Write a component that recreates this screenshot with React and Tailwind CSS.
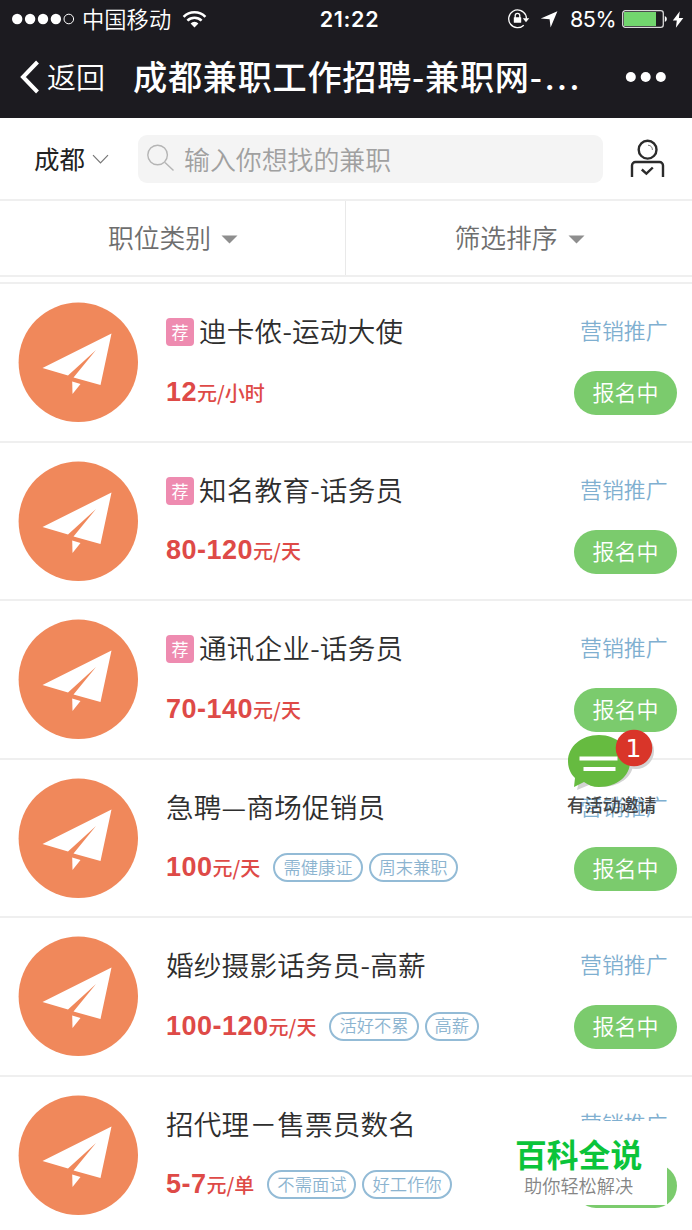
const jobs = [
  { title: '迪卡侬-运动大使', hot: true, pay: '12', unit: '元/小时', tags: [] },
  { title: '知名教育-话务员', hot: true, pay: '80-120', unit: '元/天', tags: [] },
  { title: '通讯企业-话务员', hot: true, pay: '70-140', unit: '元/天', tags: [] },
  { title: '急聘—商场促销员', pay: '100', unit: '元/天', tags: ['需健康证', '周末兼职'] },
  { title: '婚纱摄影话务员-高薪', pay: '100-120', unit: '元/天', tags: ['活好不累', '高薪'] },
  { title: '招代理－售票员数名', pay: '5-7', unit: '元/单', tags: ['不需面试', '好工作你'] },
];

function StatusBar() {
  return (
    <div className="grid h-[38px] grid-cols-3 items-center text-white">
      <div className="flex items-center pl-3">
        <svg width="63" height="12" viewBox="0 0 63 12" fill="#fff">
          <circle cx="5.2" cy="6" r="5.2" />
          <circle cx="18.1" cy="6" r="5.2" />
          <circle cx="31" cy="6" r="5.2" />
          <circle cx="43.9" cy="6" r="5.2" />
          <circle cx="56.8" cy="6" r="4.8" fill="none" stroke="#fff" strokeWidth="1" />
        </svg>
        <span className="ml-[7px] pb-[3px] text-[22.3px] leading-[30px] font-[350]">中国移动</span>
        <svg className="ml-[11px]" width="25" height="18" viewBox="0 0 25 18" fill="none" stroke="#fff">
          <path d="M1.6 6.8a15.4 15.4 0 0 1 21.8 0" strokeWidth="2.6" />
          <path d="M5.4 10.6a10 10 0 0 1 14.2 0" strokeWidth="2.5" />
          <path d="M12.5 17.4 8.6 13.4a5.6 5.6 0 0 1 7.8 0z" fill="#fff" stroke="none" />
        </svg>
      </div>
      <div className="pl-[7px] text-center font-['Inter'] text-[21.5px] font-semibold tracking-[0.7px]">21:22</div>
      <div className="flex items-center justify-end pr-2">
        <svg width="22" height="20" viewBox="0 0 22 20">
          <path d="M17.7 6.1A8.9 8.9 0 1 0 15.8 16.2" fill="none" stroke="#fff" strokeWidth="1.3" />
          <path d="M17.7 6.1a8.9 8.9 0 0 1 .7 3.6" fill="none" stroke="#fff" strokeWidth="1.3" />
          <path d="M14.8 9.2h6.4L18 13.2z" fill="#fff" />
          <rect x="5.8" y="8.2" width="7.4" height="5.6" rx=".6" fill="#fff" />
          <path d="M7.2 9V6.6a2.3 2.3 0 0 1 4.6 0V9" fill="none" stroke="#fff" strokeWidth="1.3" />
        </svg>
        <svg className="ml-[10px]" width="18" height="17" viewBox="0 0 18 17" fill="#fff">
          <path d="M17.4.3 10.6 16.6 9.6 8.2.8 7.6z" />
        </svg>
        <span className="ml-[12px] font-['Inter'] text-[21.5px] leading-[30px] tracking-[-0.5px]">85%</span>
        <svg className="ml-[6px]" width="46" height="18" viewBox="0 0 46 18">
          <rect x=".7" y=".7" width="40.6" height="16.6" rx="2.6" fill="none" stroke="#d9d9d9" strokeWidth="1.3" />
          <rect x="2" y="2" width="32" height="14" fill="#72d66e" />
          <path d="M42.8 6a3.2 3.2 0 0 1 0 6z" fill="#fff" />
        </svg>
        <svg className="ml-[4px]" width="12" height="17" viewBox="0 0 12 17" fill="#fff">
          <path d="M7.8.3.8 9.6h4L3.9 16.8 11.3 7H6.9z" />
        </svg>
      </div>
    </div>
  );
}

function NavBar() {
  return (
    <div className="flex h-20 items-center pr-[25px] pb-[2px] pl-5 text-white">
      <svg width="20" height="34" viewBox="0 0 20 34" fill="none" stroke="#fff" strokeWidth="4">
        <path d="M17.5 2 3 17l14.5 15" />
      </svg>
      <span className="ml-[7px] text-[29px] font-[350]">返回</span>
      <h1 className="ml-[28px] flex-1 text-[34.2px] font-medium tracking-[0.7px] whitespace-nowrap">
        成都兼职工作招聘-兼职网-<span className="ml-[2px] font-['Inter'] tracking-[1.9px]">...</span>
      </h1>
      <svg width="42" height="12" viewBox="0 0 42 12" fill="#fff">
        <circle cx="5.8" cy="6" r="5" />
        <circle cx="20.7" cy="6" r="5" />
        <circle cx="35.8" cy="6" r="5" />
      </svg>
    </div>
  );
}

function SearchRow() {
  return (
    <div className="flex h-[83px] items-center border-b-2 border-[#efefef] pl-[34px]">
      <span className="shrink-0 pb-[2px] text-[25.5px] leading-9 whitespace-nowrap text-[#222]">成都</span>
      <svg className="ml-[7px] shrink-0" width="17" height="10" viewBox="0 0 17 10" fill="none" stroke="#777" strokeWidth="1.2">
        <path d="M1 1.2 8.5 8.8 16 1.2" />
      </svg>
      <div className="ml-[29px] flex h-12 w-[465px] shrink-0 items-center rounded-[9px] bg-[#f4f4f4] pl-[9px]">
        <svg className="mb-[2px]" width="28" height="28" viewBox="0 0 28 28" fill="none" stroke="#b5b5b5" strokeWidth="1.4">
          <circle cx="10.6" cy="11" r="9.8" />
          <path d="m18 18.5 8.5 8" />
        </svg>
        <span className="ml-[9px] text-[25.9px] leading-9 font-[350] text-[#a0a0a0]">输入你想找的兼职</span>
      </div>
      <svg className="ml-[27px] shrink-0" width="36" height="40" viewBox="0 0 36 40" fill="none" stroke="#2b2b2b" strokeWidth="2.4">
        <circle cx="17.6" cy="10.7" r="8.9" />
        <path d="M18 6.2a4.800 4.800 0 0 1 4.400 4.800" strokeWidth="1" stroke="#777" />
        <path d="M2 38V26.500a3.500 3.500 0 0 1 3.500-3.500h24a3.500 3.500 0 0 1 3.500 3.500V38" />
        <path d="m11.800 30.500 4.600 4.200 6.400-6.200" />
      </svg>
    </div>
  );
}

function Filter({ label }) {
  return (
    <div className="flex items-center justify-center gap-[10px] pl-px">
      <span className="pb-[2px] text-[25.8px] leading-9 font-[350] text-[#6e6e6e]">{label}</span>
      <svg className="mt-[2px]" width="17" height="9" viewBox="0 0 17 9" fill="#8e8e8e">
        <path d="M.5.5h16l-8 8z" />
      </svg>
    </div>
  );
}

function PlaneBadge() {
  return (
    <svg width="120" height="120" viewBox="0 0 120 120">
      <circle cx="60.300" cy="60.300" r="59.700" fill="#f0885b" />
      <path d="M93.500 31.500 24.500 66l25.500 7.500L78 48 55.500 75.500l27 7.500z" fill="#fff" />
      <path d="M54.200 79.500 62.500 82 54.500 92z" fill="#fff" />
    </svg>
  );
}

function JobRow({ job }) {
  return (
    <li className="flex h-[158.6px] border-b-2 border-[#efefef] pr-[15px] pl-[18px]">
      <div className="w-[148px] shrink-0 pt-[18px]">
        <PlaneBadge />
      </div>
      <div className="flex-1 pt-[26px]">
        <div className="flex h-[42px] items-center">
          {job.hot && (
            <span className="mt-[2px] mr-[5px] flex h-[28px] w-[28px] items-center justify-center rounded-[4px] bg-[#ee8bb0] text-[17px] leading-[26px] text-white">
              荐
            </span>
          )}
          <span className="pb-[2px] text-[27.600px] leading-10 font-[350] tracking-[0.200px] whitespace-nowrap text-[#2e2e2e]">
            {job.title}
          </span>
        </div>
        <div className="mt-[20px] flex h-[40px] items-center whitespace-nowrap">
          <span className="flex items-baseline text-[#de4a47]">
            <b className="font-['Liberation_Sans'] text-[27px] leading-10 tracking-[0.500px]">{job.pay}</b>
            <span className="text-[20px] leading-10 font-medium">{job.unit}</span>
          </span>
          <span className="ml-[13px] flex gap-[6px]">
            {job.tags.map((tag) => (
              <span
                key={tag}
                className="flex h-[29px] items-center rounded-full border-2 border-[#93bbd6] px-[8px] pb-[2px] text-[17.300px] leading-[24px] font-[350] text-[#8cb4d0]"
              >
                {tag}
              </span>
            ))}
          </span>
        </div>
      </div>
      <div className="flex w-[103px] flex-col pt-[27px]">
        <span className="h-[60px] pl-[6px] text-[21.900px] leading-[38px] font-[350] text-[#7fafd0]">营销推广</span>
        <button className="h-11 rounded-full bg-[#7bcb6d] pb-[4px] text-[22px] leading-[40px] font-[350] text-white">报名中</button>
      </div>
    </li>
  );
}

function InviteBubble() {
  return (
    <div className="absolute top-[728px] left-[566px] w-[92px]">
      <svg className="block" width="92" height="66" viewBox="0 0 92 66">
        <path
          d="M35 11C17 11 5 22 5 36c0 7 3 13 8 17l-2 9 12-5c4 1 8 2 12 2 18 0 32-10 32-23S53 11 35 11z"
          fill="#d3d3d3"
        />
        <circle cx="70" cy="23" r="18" fill="#d3d3d3" />
        <path
          d="M33 7C15 7 2 19 2 33c0 8 3 13 7 17l-1 9 10-5c4 3 9 5 15 5 18 0 31-11 31-25S51 7 33 7z"
          fill="#66bb40"
        />
        <path d="M13.500 30.500h38M17.500 41h32" stroke="#fff" strokeWidth="3.800" />
        <circle cx="68" cy="20" r="18.300" fill="#d93529" />
        <text x="67.500" y="28.500" textAnchor="middle" fill="#fff" fontFamily="DejaVu Sans" fontSize="25">
          1
        </text>
      </svg>
      <span className="-mt-px block pl-[1px] text-[17.900px] leading-[22px] font-medium whitespace-nowrap text-[#444]">有活动邀请</span>
    </div>
  );
}

function Signature() {
  return (
    <div className="absolute top-[1121px] left-[505px] flex h-[84px] w-[162px] flex-col bg-white pl-[10px] whitespace-nowrap">
      <span className="pt-[12px] text-[31.800px] leading-10 font-bold text-[#0bc43a]">百科全说</span>
      <span className="pt-px pl-[9px] text-[18.200px] leading-[22px] font-[350] text-[#858585]">助你轻松解决</span>
    </div>
  );
}

export default function App() {
  return (
    <div className="relative h-[1230px] w-[692px] overflow-hidden bg-white font-['Noto_Sans_CJK_SC',sans-serif]">
      <header className="bg-[#1c1b20]">
        <StatusBar />
        <NavBar />
      </header>
      <SearchRow />
      <div className="grid h-[76px] grid-cols-2 divide-x divide-[#e9e9e9] border-b-2 border-b-[#efefef]">
        <Filter label="职位类别" />
        <Filter label="筛选排序" />
      </div>
      <ul className="mt-[5px] border-t-2 border-[#efefef]">
        {jobs.map((job) => (
          <JobRow key={job.title} job={job} />
        ))}
      </ul>
      <InviteBubble />
      <Signature />
    </div>
  );
}
